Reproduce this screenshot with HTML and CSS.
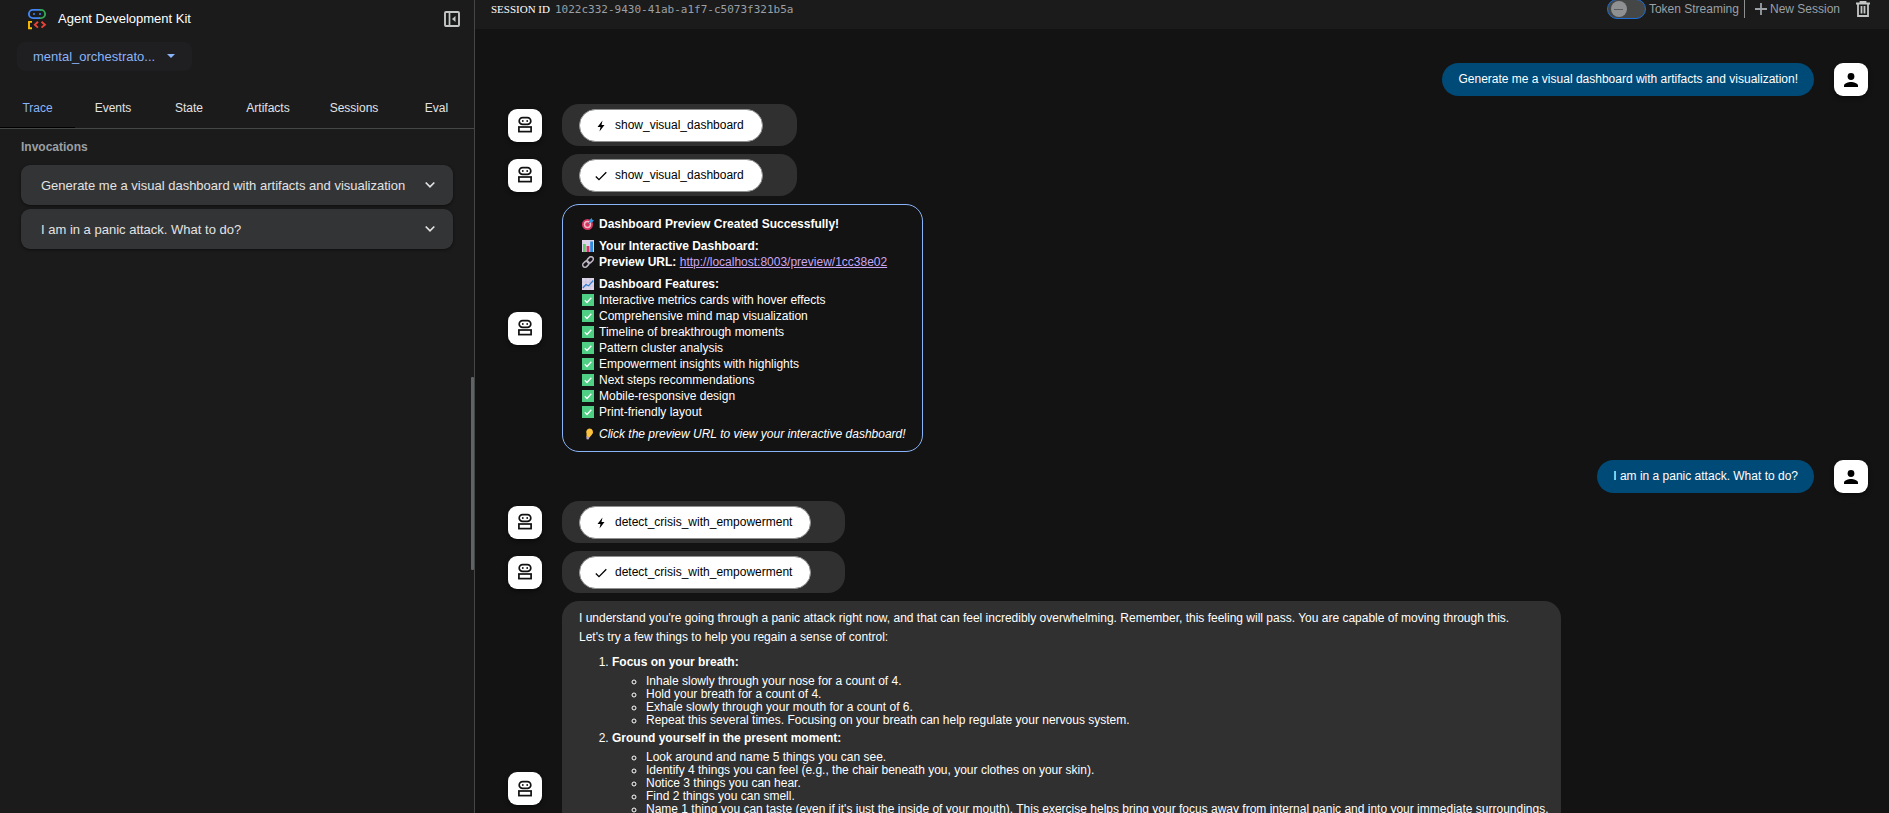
FILE: index.html
```html
<!DOCTYPE html>
<html lang="en">
<head>
  <meta charset="UTF-8">
  <meta name="viewport" content="width=device-width, initial-scale=1.0">
  <title>Agent Development Kit</title>
  <link rel="stylesheet" href="styles.css">
</head>
<body>

  <!-- Shared icons -->
  <svg class="sprite" aria-hidden="true">
    <symbol id="icon-robot" viewBox="0 0 16 18">
      <rect x="2.200" y="1.600" width="11.600" height="6.800" rx="3.400" fill="none" stroke="#111" stroke-width="1.700"/>
      <circle cx="5.800" cy="5" r="0.900" fill="#111"/>
      <circle cx="10.200" cy="5" r="0.900" fill="#111"/>
      <rect x="1.900" y="11" width="12.200" height="4.600" fill="none" stroke="#111" stroke-width="1.700"/>
    </symbol>
    <symbol id="icon-person" viewBox="0 0 16 16">
      <circle cx="8" cy="4.500" r="3.400" fill="#000"/>
      <path d="M1 15v-1.500c0-2.300 4.500-3.500 7-3.500s7 1.200 7 3.500v1.500z" fill="#000"/>
    </symbol>
    <symbol id="icon-bolt" viewBox="0 0 12 12">
      <path d="M7.500 0.500L2.500 7h3L4.500 11.500L9.500 5h-3z" fill="#000"/>
    </symbol>
    <symbol id="icon-check" viewBox="0 0 12 12">
      <path d="M0.800 6.500L4 9.700L11.300 2.300" fill="none" stroke="#000" stroke-width="1.300"/>
    </symbol>
    <symbol id="icon-chevron" viewBox="0 0 10 10">
      <path d="M0.700 2.500L5 6.800L9.300 2.500" fill="none" stroke="#e3e3e3" stroke-width="1.700"/>
    </symbol>
    <symbol id="icon-done" viewBox="0 0 12 12">
      <rect width="12" height="12" fill="#4fcf83"/>
      <path d="M2.800 6.300L5 8.500L9.300 3.800" fill="none" stroke="#fff" stroke-width="1.300"/>
    </symbol>
  </svg>

  <div class="app">

    <!-- Side panel -->
    <aside class="sidebar">
      <div class="brand">
        <svg class="brand-logo" width="20" height="22" viewBox="0 0 20 22" aria-hidden="true">
          <path d="M14 1.900H6a4.100 4.100 0 0 0 0 8.200H13" fill="none" stroke="#4285f4" stroke-width="1.900"/>
          <path d="M13 1.900H14a4.100 4.100 0 0 1 0 8.200H12" fill="none" stroke="#34a853" stroke-width="1.900"/>
          <circle cx="7" cy="6" r="1" fill="#4285f4"/>
          <circle cx="13" cy="6" r="1" fill="#4285f4"/>
          <path d="M5 13.900H2v6.400H5" fill="none" stroke="#fbbc04" stroke-width="1.900"/>
          <path d="M11 13.800L7.800 16.700L11 19.600M14.500 13.800L17.900 16.700L14.500 19.600" fill="none" stroke="#ea4335" stroke-width="1.900"/>
        </svg>
        <span class="brand-name">Agent Development Kit</span>
        <button class="icon-button" aria-label="Collapse panel">
          <svg width="16" height="16" viewBox="0 0 16 16">
            <rect x="1" y="1" width="14" height="14" rx="1" fill="none" stroke="#c4c7c5" stroke-width="1.900"/>
            <path d="M5.500 1V15" stroke="#c4c7c5" stroke-width="1.700"/>
            <path d="M11.500 5v6L8 8z" fill="#c4c7c5"/>
          </svg>
        </button>
      </div>

      <div class="app-select">
        <select aria-label="Select an app">
          <option>mental_orchestrato...</option>
        </select>
      </div>

      <nav class="tabs">
        <a href="#" class="tab active">Trace</a>
        <a href="#" class="tab">Events</a>
        <a href="#" class="tab">State</a>
        <a href="#" class="tab">Artifacts</a>
        <a href="#" class="tab">Sessions</a>
        <a href="#" class="tab">Eval</a>
      </nav>

      <div class="trace">
        <h2>Invocations</h2>
        <button class="invocation">
          <span>Generate me a visual dashboard with artifacts and visualization</span>
          <svg width="10" height="10"><use href="#icon-chevron"/></svg>
        </button>
        <button class="invocation">
          <span>I am in a panic attack. What to do?</span>
          <svg width="10" height="10"><use href="#icon-chevron"/></svg>
        </button>
      </div>

      <div class="resize-handle"></div>
    </aside>

    <!-- Chat -->
    <main class="chat">
      <header class="toolbar">
        <span class="session-label">Session ID</span>
        <span class="session-id">1022c332-9430-41ab-a1f7-c5073f321b5a</span>
        <label class="streaming">
          <input type="checkbox" role="switch">
          Token Streaming
        </label>
        <button class="new-session">
          <svg width="12" height="12" viewBox="0 0 12 12" aria-hidden="true"><path d="M6 0V12M0 6H12" stroke="#9aa0a6" stroke-width="1.800"/></svg>
          New Session
        </button>
        <button class="icon-button delete" aria-label="Delete session">
          <svg width="14" height="16" viewBox="0 0 14 16">
            <path d="M0 2.500H14M4.500 2V0.800H9.500V2M2 3V15H12V3M5.500 5V12.500M8.500 5V12.500" fill="none" stroke="#c4c7c5" stroke-width="1.800"/>
          </svg>
        </button>
      </header>

      <div class="messages">
        <div class="message user">
          <div class="bubble">Generate me a visual dashboard with artifacts and visualization!</div>
          <div class="avatar"><svg width="16" height="16"><use href="#icon-person"/></svg></div>
        </div>

        <div class="message">
          <div class="avatar"><svg width="16" height="18"><use href="#icon-robot"/></svg></div>
          <div class="bubble call">
            <button class="function"><svg width="12" height="12"><use href="#icon-bolt"/></svg>show_visual_dashboard</button>
          </div>
        </div>

        <div class="message">
          <div class="avatar"><svg width="16" height="18"><use href="#icon-robot"/></svg></div>
          <div class="bubble call">
            <button class="function"><svg width="12" height="12"><use href="#icon-check"/></svg>show_visual_dashboard</button>
          </div>
        </div>

        <div class="message">
          <div class="avatar"><svg width="16" height="18"><use href="#icon-robot"/></svg></div>
          <div class="bubble card">
            <p>
              <svg class="emoji" viewBox="0 0 12 12">
                <circle cx="5.500" cy="6.500" r="5.500" fill="#d8345f"/>
                <circle cx="5.500" cy="6.500" r="3.700" fill="#f3b9c8"/>
                <circle cx="5.500" cy="6.500" r="2.200" fill="#d8345f"/>
                <path d="M5.500 6.500L9 3" stroke="#5b6b80" stroke-width="1"/>
                <path d="M7.500 4.500V2L9.800 0L10.200 1.800L12 2.200L10 4.500z" fill="#2f9be8"/>
              </svg><strong>Dashboard Preview Created Successfully!</strong>
            </p>
            <p>
              <svg class="emoji" viewBox="0 0 12 12">
                <rect width="12" height="12" fill="#dcd5ea"/>
                <rect x="1" y="4" width="2.800" height="8" fill="#5ecb6b"/>
                <rect x="4.600" y="6" width="2.800" height="6" fill="#d8345f"/>
                <rect x="8.200" y="1.500" width="2.800" height="10.500" fill="#2f8be0"/>
              </svg><strong>Your Interactive Dashboard:</strong><br>
              <svg class="emoji" viewBox="0 0 12 12">
                <g transform="rotate(-45 6 6)" fill="none" stroke="#bdb4c4" stroke-width="1.500">
                  <rect x="-0.500" y="3.700" width="7" height="4.600" rx="2.300"/>
                  <rect x="5.500" y="3.700" width="7" height="4.600" rx="2.300"/>
                </g>
              </svg><strong>Preview URL:</strong> <a href="http://localhost:8003/preview/1cc38e02">http://localhost:8003/preview/1cc38e02</a>
            </p>
            <p>
              <svg class="emoji" viewBox="0 0 12 12">
                <rect width="12" height="12" fill="#dcd5ea"/>
                <path d="M0 4H12M0 8H12M4 0V12M8 0V12" stroke="#c2b8d6" stroke-width="0.500"/>
                <path d="M0.800 10L4 6.500L6.500 7.800L11.300 2.500" fill="none" stroke="#2f7fd0" stroke-width="1.200"/>
              </svg><strong>Dashboard Features:</strong><br>
              <svg class="emoji"><use href="#icon-done"/></svg>Interactive metrics cards with hover effects<br>
              <svg class="emoji"><use href="#icon-done"/></svg>Comprehensive mind map visualization<br>
              <svg class="emoji"><use href="#icon-done"/></svg>Timeline of breakthrough moments<br>
              <svg class="emoji"><use href="#icon-done"/></svg>Pattern cluster analysis<br>
              <svg class="emoji"><use href="#icon-done"/></svg>Empowerment insights with highlights<br>
              <svg class="emoji"><use href="#icon-done"/></svg>Next steps recommendations<br>
              <svg class="emoji"><use href="#icon-done"/></svg>Mobile-responsive design<br>
              <svg class="emoji"><use href="#icon-done"/></svg>Print-friendly layout
            </p>
            <p>
              <svg class="emoji" viewBox="0 0 12 12">
                <path d="M7.500 0.500a3.600 3.600 0 0 1 2.300 6.300L7.500 9.500L4.500 8.500V5.500A3.600 3.600 0 0 1 7.500 0.500z" fill="#fdc23e"/>
                <path d="M4.300 8L7.500 9.500L6.500 11.500L4.500 11.300z" fill="#b9a6c9"/>
              </svg><em>Click the preview URL to view your interactive dashboard!</em>
            </p>
          </div>
        </div>

        <div class="message user">
          <div class="bubble">I am in a panic attack. What to do?</div>
          <div class="avatar"><svg width="16" height="16"><use href="#icon-person"/></svg></div>
        </div>

        <div class="message">
          <div class="avatar"><svg width="16" height="18"><use href="#icon-robot"/></svg></div>
          <div class="bubble call">
            <button class="function"><svg width="12" height="12"><use href="#icon-bolt"/></svg>detect_crisis_with_empowerment</button>
          </div>
        </div>

        <div class="message">
          <div class="avatar"><svg width="16" height="18"><use href="#icon-robot"/></svg></div>
          <div class="bubble call">
            <button class="function"><svg width="12" height="12"><use href="#icon-check"/></svg>detect_crisis_with_empowerment</button>
          </div>
        </div>

        <div class="message">
          <div class="avatar"><svg width="16" height="18"><use href="#icon-robot"/></svg></div>
          <div class="bubble answer">
            <p>I understand you're going through a panic attack right now, and that can feel incredibly overwhelming. Remember, this feeling will pass. You are capable of moving through this.</p>
            <p>Let's try a few things to help you regain a sense of control:</p>
            <ol>
              <li><strong>Focus on your breath:</strong>
                <ul>
                  <li>Inhale slowly through your nose for a count of 4.</li>
                  <li>Hold your breath for a count of 4.</li>
                  <li>Exhale slowly through your mouth for a count of 6.</li>
                  <li>Repeat this several times. Focusing on your breath can help regulate your nervous system.</li>
                </ul>
              </li>
              <li><strong>Ground yourself in the present moment:</strong>
                <ul>
                  <li>Look around and name 5 things you can see.</li>
                  <li>Identify 4 things you can feel (e.g., the chair beneath you, your clothes on your skin).</li>
                  <li>Notice 3 things you can hear.</li>
                  <li>Find 2 things you can smell.</li>
                  <li>Name 1 thing you can taste (even if it's just the inside of your mouth). This exercise helps bring your focus away from internal panic and into your immediate surroundings.</li>
                </ul>
              </li>
            </ol>
          </div>
        </div>
      </div>
    </main>

  </div>

</body>
</html>
```
FILE: styles.css
```css
* {
  box-sizing: border-box;
}
body {
  margin: 0;
  background-color: #131313;
  color: #fff;
  font-family: "Liberation Sans", Arial, sans-serif;
  font-size: 12px;
  line-height: 13px;
}
button {
  margin: 0;
  padding: 0;
  border: none;
  background: none;
  color: inherit;
  font: inherit;
  cursor: pointer;
}
svg {
  flex: none;
}
.sprite {
  display: none;
}
.app {
  display: flex;
  height: 100vh;
  overflow: hidden;
}

/* Side panel */
.sidebar {
  position: relative;
  flex: none;
  width: 475px;
  background-color: #1b1b1b;
  border-right: 1px solid #444746;
}
.brand {
  display: flex;
  align-items: center;
  height: 37px;
  padding: 0 14px 0 27px;
}
.brand-name {
  flex: 1;
  margin-left: 11px;
  font-size: 13px;
}
.icon-button {
  display: flex;
}
.app-select {
  position: relative;
  width: 175px;
  margin: 5px 0 0 17px;
}
.app-select select {
  width: 100%;
  height: 29px;
  padding: 0 32px 0 16px;
  appearance: none;
  border: none;
  border-radius: 8px;
  background-color: #1f1f22;
  color: #8ab4f8;
  font-family: inherit;
  font-size: 13px;
}
.app-select::after {
  content: "";
  position: absolute;
  top: 12px;
  right: 17px;
  border: 4px solid transparent;
  border-top-color: #8ab4f8;
  border-bottom: none;
}
.tabs {
  display: grid;
  grid-template-columns: 75fr 76fr 76fr 82fr 90fr 75fr;
  margin-top: 15px;
  border-bottom: 1px solid #444746;
}
.tab {
  height: 42px;
  padding-top: 16px;
  color: #e3e3e3;
  text-align: center;
  text-decoration: none;
}
.tab.active {
  color: #8ab4f8;
  border-bottom: 1px solid #000;
}
.trace {
  display: flex;
  flex-direction: column;
  gap: 4px;
  padding: 12px 21px;
}
.trace h2 {
  margin: 0 0 7px;
  color: #9aa0a6;
  font-size: 12px;
  line-height: 13px;
}
.invocation {
  display: flex;
  align-items: center;
  gap: 12px;
  height: 40px;
  padding: 0 18px 0 20px;
  border-radius: 9px;
  background-color: #333436;
  box-shadow: 0 1px 3px rgba(0, 0, 0, 0.5);
  color: #e3e3e3;
  font-size: 13px;
  text-align: left;
}
.invocation span {
  flex: 1;
  min-width: 0;
  overflow: hidden;
  line-height: 17px;
  white-space: nowrap;
}
.resize-handle {
  position: absolute;
  top: 377px;
  right: 0;
  width: 3px;
  height: 193px;
  border-radius: 1px;
  background-color: #5f6368;
}

/* Toolbar */
.chat {
  flex: 1;
  min-width: 0;
}
.toolbar {
  display: flex;
  align-items: center;
  height: 29px;
  padding: 0 19px 11px 16px;
  background-color: #1b1b1b;
  color: #9aa0a6;
}
.session-label {
  margin-right: 5px;
  color: #fff;
  font-family: "Liberation Serif", serif;
  font-size: 11px;
  text-transform: uppercase;
}
.session-id {
  font-family: "DejaVu Sans Mono", monospace;
  font-size: 11px;
}
.streaming {
  display: flex;
  align-items: center;
  gap: 3px;
  margin-left: auto;
}
.streaming input {
  display: flex;
  align-items: center;
  width: 39px;
  height: 20px;
  margin: 0;
  padding: 0 3px;
  appearance: none;
  border: 1px solid #1f6fd6;
  border-radius: 10px;
  background-color: #444746;
}
.streaming input::before {
  content: "";
  width: 16px;
  height: 16px;
  border-radius: 50%;
  background: linear-gradient(#5a5c5e, #5a5c5e) center / 9px 1px no-repeat #8e9092;
}
.new-session {
  display: flex;
  align-items: center;
  gap: 3px;
  height: 18px;
  margin-left: 5px;
  padding-left: 10px;
  border-left: 1px solid #8e918f;
}
.delete {
  margin-left: 16px;
}

/* Messages */
.messages {
  display: flex;
  flex-direction: column;
  gap: 8px;
  padding: 34px 21px 34px 33px;
}
.message {
  display: flex;
  align-items: center;
  gap: 20px;
}
.message.user {
  justify-content: flex-end;
}
.avatar {
  display: flex;
  flex: none;
  align-items: center;
  justify-content: center;
  width: 34px;
  height: 33px;
  border-radius: 9px;
  background-color: #fff;
  box-shadow: 0 2px 4px rgba(0, 0, 0, 0.5);
}
.bubble {
  padding: 5px 17px;
  border-radius: 17px;
  background-color: #303030;
}
.user .bubble {
  padding: 10px 16px;
  background-color: #004a77;
}
.bubble.call {
  height: 42px;
  padding-right: 34px;
}
.bubble.card {
  padding: 5px 16px 3px;
  border: 1px solid #8ab4f8;
  background: none;
  line-height: 16px;
}
.bubble.answer {
  min-height: 375px;
  padding-right: 12px;
}
.function {
  display: flex;
  align-items: center;
  gap: 8px;
  height: 33px;
  padding: 0 18px 0 15px;
  border: 1px solid #8e918f;
  border-radius: 17px;
  background-color: #fff;
  color: #000;
}
.bubble p {
  margin: 6px 0;
}
.card a {
  color: #c9a6f5;
}
.emoji {
  width: 12px;
  height: 12px;
  margin: 0 5px 0 3px;
  vertical-align: -2px;
}
.answer ol {
  margin: 12px 0;
  padding-left: 33px;
}
.answer ul {
  margin: 6px 0 5px;
  padding-left: 34px;
}
```
